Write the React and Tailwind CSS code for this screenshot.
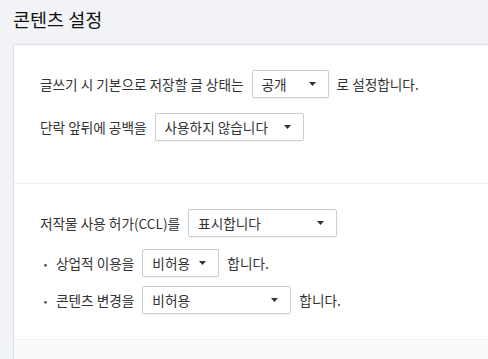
import { useState } from 'react';

// 드롭다운 (모양만)
function Select({ value, width }) {
  return (
    <div
      className="h-[28px] flex items-center justify-between border border-[#c9cdd4] rounded-[2px] bg-white pl-[9px] pr-[12px] shadow-[0_1px_1px_rgba(0,0,0,0.04)] text-[#333]"
      style={{ width }}
    >
      <span>{value}</span>
      <svg width="7" height="4" viewBox="0 0 7 4">
        <path d="M0 0h7L3.5 4z" fill="#333" />
      </svg>
    </div>
  );
}

function Row({ children, bullet }) {
  return (
    <div className="flex items-center h-[28px] gap-[8px]">
      {bullet && <span className="w-[5px] ml-[3px] text-[10px] text-[#444] text-center">•</span>}
      {children}
    </div>
  );
}

export default function App() {
  const [status] = useState('공개');

  return (
    <div
      className="min-h-screen bg-[#f2f3f6] pl-[13px] text-[13.65px] text-[#333] flex flex-col"
      style={{ fontFamily: '"Noto Sans CJK KR", "Noto Sans", sans-serif' }}
    >
      <h1 className="h-[44px] pt-[6px] text-[18.5px] leading-[26px] text-[#111]">콘텐츠 설정</h1>

      <div className="flex-1 border-l border-t border-[#dde0e6] bg-[#f9fafb] flex flex-col">
        {/* 기본 글 상태 */}
        <section className="bg-white px-[26px] pt-[25px] pb-[42px] flex flex-col gap-[15px] border-b border-[#eef0f3]">
          <Row>
            <span>글쓰기 시 기본으로 저장할 글 상태는</span>
            <Select value={status} width={77} />
            <span>로 설정합니다.</span>
          </Row>
          <Row>
            <span>단락 앞뒤에 공백을</span>
            <Select value="사용하지 않습니다" width={149} />
          </Row>
        </section>

        {/* CCL */}
        <section className="bg-white px-[26px] pt-[25px] pb-[25px] flex flex-col border-b border-[#eef0f3]">
          <Row>
            <span>저작물 사용 허가(CCL)를</span>
            <Select value="표시합니다" width={149} />
          </Row>
          <div className="mt-[12px]">
            <Row bullet>
              <span>상업적 이용을</span>
              <Select value="비허용" width={77} />
              <span>합니다.</span>
            </Row>
          </div>
          <div className="mt-[9px]">
            <Row bullet>
              <span>콘텐츠 변경을</span>
              <Select value="비허용" width={149} />
              <span>합니다.</span>
            </Row>
          </div>
        </section>
      </div>
    </div>
  );
}
